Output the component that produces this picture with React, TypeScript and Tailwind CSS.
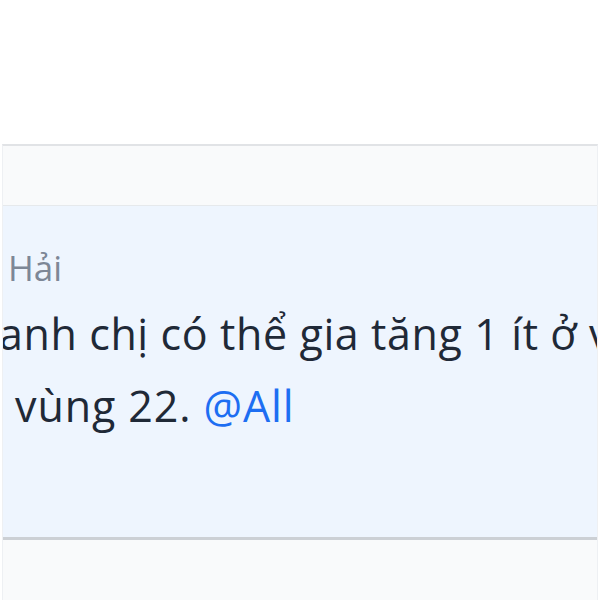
export default function App() {
  return (
    <div className="w-[600px] h-[600px] overflow-hidden bg-white flex flex-col" style={{ fontFamily: '"Open Sans", "Noto Sans", sans-serif' }}>
      {/* top white area */}
      <div className="h-[144px] shrink-0 bg-white" />

      {/* message list panel */}
      <div className="flex-1 mx-[2px] border-t-2 border-x border-t-[#e1e3e6] border-x-[#eef0f3] bg-[#f9fafb] pt-[59px] flex flex-col">
        <div className="h-[335px] shrink-0 border-t border-[#e6e9ec] border-b-[3px] border-b-[#ccd0d5] bg-[#eef5fe] overflow-hidden pt-[42px]">
          <div className="pl-[5px] text-[35px] leading-[40px] text-[#7d8796] whitespace-nowrap">Hải</div>
          <div className="mt-[10px] text-[43px] tracking-[0.6px] leading-[72px] text-[#1f2937] whitespace-nowrap">
            <div className="-ml-[4px]">anh chị có thể gia tăng 1 ít ở vùng</div>
            <div className="pl-[12px] tracking-[0.9px]">
              vùng 22. <span className="text-[#1d6ef2]">@All</span>
            </div>
          </div>
        </div>
      </div>
    </div>
  );
}
